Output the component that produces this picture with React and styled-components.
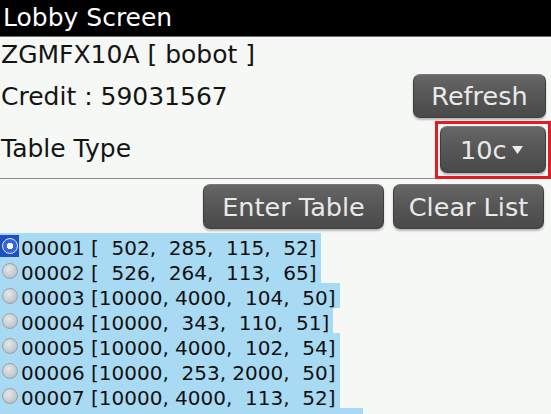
import React from "react";
import styled, { createGlobalStyle } from "styled-components";

const Global = createGlobalStyle`
  html, body {
    margin: 0;
    padding: 0;
    background: #f5f8f4;
    overflow: hidden;
  }
  body {
    font-family: "DejaVu Sans", "Liberation Sans", sans-serif;
    color: #141414;
  }
`;

const Screen = styled.div`
  width: 551px;
  height: 414px;
  overflow: hidden;
  display: flex;
  flex-direction: column;
  background: #f5f8f4;
`;

const TitleBar = styled.div`
  height: 36px;
  line-height: 36px;
  background: #000;
  color: #fff;
  font-size: 25px;
  padding-left: 3px;
  border-bottom: 1px solid #6c6c6c;
  flex-shrink: 0;
`;

const InfoLine = styled.div`
  height: 36px;
  line-height: 36px;
  font-size: 25px;
  padding-left: 1px;
  white-space: pre;
  flex-shrink: 0;
`;

const FieldRow = styled.div`
  display: flex;
  align-items: center;
  justify-content: space-between;
  height: ${(p) => p.$h}px;
  font-size: 25px;
  padding-left: 1px;
  padding-right: ${(p) => p.$pr || 0}px;
  flex-shrink: 0;
  border-bottom: ${(p) => (p.$divider ? "1px solid #8c8c8c" : "none")};
`;

const Button = styled.button`
  display: flex;
  align-items: center;
  justify-content: ${(p) => (p.$left ? "flex-start" : "center")};
  gap: 6px;
  width: ${(p) => p.$w}px;
  height: ${(p) => p.$h}px;
  padding: 0 0 0 ${(p) => p.$pl || 0}px;
  margin: 0;
  border: 1px solid #3e3e3e;
  border-top-color: #777;
  border-radius: 7px;
  background: linear-gradient(#676767 0%, #575757 45%, #494949 100%);
  box-shadow: 0 2px 2px rgba(0, 0, 0, 0.25);
  color: #e9e9e9;
  font-family: "DejaVu Sans", "Liberation Sans", sans-serif;
  font-size: 25.5px;
  cursor: pointer;
`;

const FocusRing = styled.div`
  position: relative;
  align-self: flex-end;
  margin-bottom: -1px;
  padding: 2px 2px 3px 2px;
  border: 3px solid #e31b23;
  background: #f5f8f4;
`;

const ButtonBar = styled.div`
  display: flex;
  justify-content: flex-end;
  gap: 9px;
  padding: 5px 7px 4px 0;
  flex-shrink: 0;
`;

const List = styled.div`
  display: flex;
  flex-direction: column;
`;

const Item = styled.div`
  display: flex;
  align-items: center;
  width: ${(p) => (p.$w ? `${p.$w}px` : "fit-content")};
  height: 25px;
  padding-right: 4px;
  background: #a9daf3;
  font-size: 20px;
  white-space: pre;
  color: #111;
`;

const ItemText = styled.span`
  padding-top: 4px;
`;

const RadioCell = styled.div`
  width: 19px;
  height: 22px;
  display: flex;
  align-items: center;
  justify-content: center;
  background: ${(p) => (p.$on ? "#1f50c2" : "transparent")};
  margin-right: 2px;
  margin-top: 1px;
`;

const RadioDot = styled.div`
  width: 16px;
  height: 16px;
  border-radius: 50%;
  box-sizing: border-box;
  ${(p) =>
    p.$on
      ? `
    border: 1.5px solid #dbe6ff;
    background: radial-gradient(circle, #ffffff 0 3px, #3566d6 3.5px 100%);
  `
      : `
    border: 1px solid #9aa3aa;
    background: radial-gradient(circle at 40% 35%, #e4e8eb 0%, #c4cace 60%, #a9b0b6 100%);
  `}
`;

const Caret = () => (
  <svg width="11" height="8" viewBox="0 0 11 8">
    <path d="M0 0 L11 0 L5.5 8 Z" fill="#ececec" />
  </svg>
);

const rows = [
  "00001 [  502,  285,  115,  52]",
  "00002 [  526,  264,  113,  65]",
  "00003 [10000, 4000,  104,  50]",
  "00004 [10000,  343,  110,  51]",
  "00005 [10000, 4000,  102,  54]",
  "00006 [10000,  253, 2000,  50]",
  "00007 [10000, 4000,  113,  52]",
];

export default function App() {
  return (
    <>
      <Global />
      <Screen>
        <TitleBar>Lobby Screen</TitleBar>
        <InfoLine>ZGMFX10A [ bobot ]</InfoLine>
        <FieldRow $h={46} $pr={5}>
          <span>Credit : 59031567</span>
          <Button $w={133} $h={44}>Refresh</Button>
        </FieldRow>
        <FieldRow $h={59} $divider>
          <span>Table Type</span>
          <FocusRing>
            <Button $w={106} $h={47} $left $pl={19}>
              10c <Caret />
            </Button>
          </FocusRing>
        </FieldRow>
        <ButtonBar>
          <Button $w={181} $h={45}>Enter Table</Button>
          <Button $w={151} $h={45}>Clear List</Button>
        </ButtonBar>
        <List>
          {rows.map((r, i) => (
            <Item key={r}>
              <RadioCell $on={i === 0}>
                <RadioDot $on={i === 0} />
              </RadioCell>
              <ItemText>{r}</ItemText>
            </Item>
          ))}
          <Item $w={359} />
        </List>
      </Screen>
    </>
  );
}
